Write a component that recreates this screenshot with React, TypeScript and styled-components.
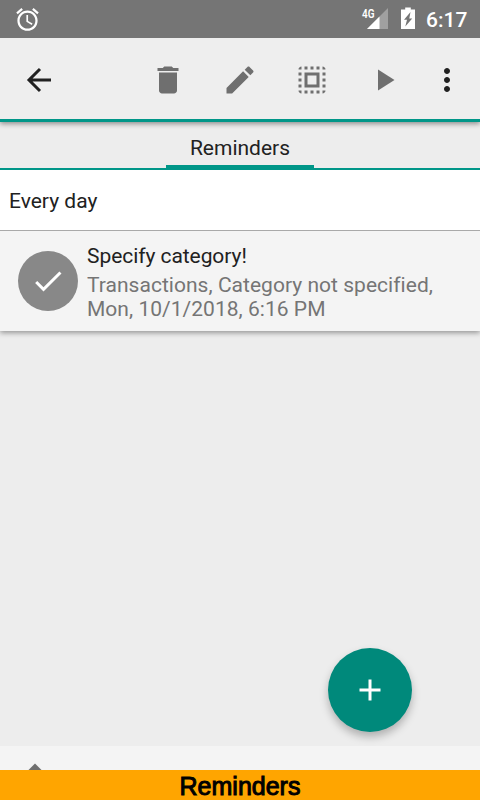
import React from "react";
import styled, { createGlobalStyle } from "styled-components";

const TEAL = "#009688";

const GlobalStyle = createGlobalStyle`
  * { box-sizing: border-box; }
  body { margin: 0; background: #ededed; }
`;

const Screen = styled.div`
  position: relative;
  display: flex;
  flex-direction: column;
  width: 480px;
  height: 800px;
  overflow: hidden;
  background: #ededed;
  color: #212121;
  font-family: Roboto, "Liberation Sans", sans-serif;
  font-size: 21px;
`;

const StatusBar = styled.header`
  display: flex;
  align-items: center;
  flex: none;
  height: 38px;
  padding: 0 12px 0 13.5px;
  background: #757575;
  color: #fff;
`;

const StatusIcons = styled.div`
  display: flex;
  align-items: center;
  gap: 11px;
  margin-left: auto;
`;

const Clock = styled.time`
  width: 42px;
  padding-top: 2px;
  font-weight: 500;
  line-height: 36px;
  white-space: nowrap;
`;

const Toolbar = styled.nav`
  position: relative;
  z-index: 1;
  display: flex;
  align-items: center;
  flex: none;
  height: 84px;
  padding: 2px 15px 0 21px;
  border-bottom: 3px solid ${TEAL};
  box-shadow: 0 2px 5px rgba(0, 0, 0, 0.4);
  clip-path: inset(0 0 -10px 0);
  background: #eee;
`;

const Actions = styled.div`
  display: flex;
  gap: 36px;
  margin-left: auto;
  margin-right: 27px;
`;

const IconButton = styled.button<{ $dark?: boolean }>`
  width: 36px;
  height: 36px;
  padding: 0;
  border: 0;
  background: none;
  color: ${(p) => (p.$dark ? "#212121" : "#6f6f6f")};
  svg { display: block; }
`;

const Tabs = styled.div`
  display: flex;
  justify-content: center;
  flex: none;
  height: 48px;
  border-bottom: 2px solid ${TEAL};
`;

const Tab = styled.div`
  width: 148px;
  height: 46px;
  padding-top: 2px;
  border-bottom: 3px solid ${TEAL};
  line-height: 48px;
  text-align: center;
`;

const Card = styled.section`
  flex: none;
  box-shadow: 0 2px 5px rgba(0, 0, 0, 0.36);
  clip-path: inset(0 0 -10px 0);
`;

const GroupTitle = styled.div`
  height: 61px;
  padding-left: 9px;
  border-bottom: 1px solid #a9a9a9;
  background: #fff;
  line-height: 62px;
`;

const Reminder = styled.div`
  display: flex;
  height: 100px;
  padding: 13px 40px 0 18px;
  background: #f4f4f4;
`;

const CheckBadge = styled.div`
  display: grid;
  place-items: center;
  flex: none;
  width: 60px;
  height: 60px;
  margin: 7px 9px 0 0;
  border-radius: 50%;
  background: #888;
`;

const ReminderText = styled.div`
  display: flex;
  flex-direction: column;
  gap: 4px;
  line-height: 25px;
`;

const Title = styled.div`
  letter-spacing: -0.06px;
`;

const Details = styled.div`
  color: #757575;
  letter-spacing: 0.03px;
  line-height: 24px;
`;

const BottomBar = styled.div`
  position: relative;
  z-index: 1;
  flex: none;
  height: 24px;
  margin-top: auto;
  padding: 16px 0 0 26px;
  overflow: hidden;
  background: #f4f4f4;
  svg { display: block; }
`;

const Caption = styled.footer`
  flex: none;
  height: 30px;
  background: #ffa500;
  color: #000;
  font-family: "Liberation Sans", Arial, sans-serif;
  font-size: 25px;
  line-height: 32px;
  text-align: center;
  -webkit-text-stroke: 1px #000;
`;

const Fab = styled.button`
  position: absolute;
  right: 68px;
  bottom: 68px;
  display: grid;
  place-items: center;
  width: 84px;
  height: 84px;
  padding: 0;
  border: 0;
  border-radius: 50%;
  background: #00897b;
  box-shadow: 0 5px 8px rgba(0, 0, 0, 0.26);
`;

const Icon = ({ d, size = 36, color = "currentColor" }: { d: string; size?: number; color?: string }) => (
  <svg width={size} height={size} viewBox="0 0 24 24" fill={color}>
    <path d={d} />
  </svg>
);

const paths = {
  alarm:
    "M22 5.72l-4.6-3.86-1.29 1.53 4.6 3.86L22 5.72zM7.88 3.39L6.6 1.86 2 5.71l1.29 1.53 4.59-3.85zM12.5 8H11v6l4.75 2.85.75-1.23-4-2.37V8zM12 4c-4.97 0-9 4.03-9 9s4.02 9 9 9c4.97 0 9-4.03 9-9s-4.03-9-9-9zm0 16c-3.87 0-7-3.13-7-7s3.13-7 7-7 7 3.13 7 7-3.13 7-7 7z",
  trash: "M6 19c0 1.1.9 2 2 2h8c1.1 0 2-.9 2-2V7H6v12zM19 4h-3.5l-1-1h-5l-1 1H5v2h14V4z",
  edit: "M3 17.25V21h3.75L17.81 9.94l-3.75-3.75L3 17.25zM20.71 7.04c.39-.39.39-1.02 0-1.41l-2.34-2.34c-.39-.39-1.02-.39-1.41 0l-1.83 1.83 3.75 3.75 1.83-1.83z",
  selectAll:
    "M3 5h2V3c-1.1 0-2 .9-2 2zm0 8h2v-2H3v2zm4 8h2v-2H7v2zM3 9h2V7H3v2zm10-6h-2v2h2V3zm6 0v2h2c0-1.1-.9-2-2-2zM5 21v-2H3c0 1.1.9 2 2 2zm-2-4h2v-2H3v2zM9 3H7v2h2V3zm2 18h2v-2h-2v2zm8-8h2v-2h-2v2zm0 8c1.1 0 2-.9 2-2h-2v2zm0-12h2V7h-2v2zm0 8h2v-2h-2v2zm-4 4h2v-2h-2v2zm0-16h2V3h-2v2zM7 17h10V7H7v10zm2-8h6v6H9V9z",
  play: "M8 5v14l11-7z",
  more: "M12 8c1.1 0 2-.9 2-2s-.9-2-2-2-2 .9-2 2 .9 2 2 2zm0 2c-1.1 0-2 .9-2 2s.9 2 2 2 2-.9 2-2-.9-2-2-2zm0 6c-1.1 0-2 .9-2 2s.9 2 2 2 2-.9 2-2-.9-2-2-2z",
  check: "M9 16.17L4.83 12l-1.42 1.41L9 19 21 7l-1.41-1.41z",
};

const SignalIcon = () => (
  <svg width="28" height="24" viewBox="0 0 28 24">
    <path d="M27 1v21H6z" fill="#a0a0a0" />
    <path d="M18.5 9.5V22H6z" fill="#fff" />
    <text x="1" y="10.8" fill="#fff" fontSize="13" fontWeight="600" textLength="12.500" lengthAdjust="spacingAndGlyphs">
      4G
    </text>
  </svg>
);

const BatteryIcon = () => (
  <svg width="15" height="24" viewBox="0 0 15 24">
    <path d="M5.200 .5h5.600v2H15V22H1V2.500h4.200z" fill="#fff" />
    <path d="M10.500 5 4 12.800h3L5.300 19.500 12.200 11.500H9.300z" fill="#757575" />
  </svg>
);

export default function App() {
  return (
    <Screen>
      <GlobalStyle />
      <StatusBar>
        <Icon d={paths.alarm} size={27} />
        <StatusIcons>
          <SignalIcon />
          <BatteryIcon />
          <Clock>6:17</Clock>
        </StatusIcons>
      </StatusBar>
      <Toolbar>
        <IconButton $dark aria-label="Back">
          <svg width="36" height="36" viewBox="0 0 36 36" fill="none" stroke="currentColor" strokeWidth="3">
            <path d="M30 18H8M19 7 8 18l11 11" />
          </svg>
        </IconButton>
        <Actions>
          <IconButton aria-label="Delete"><Icon d={paths.trash} /></IconButton>
          <IconButton aria-label="Edit"><Icon d={paths.edit} /></IconButton>
          <IconButton aria-label="Select all"><Icon d={paths.selectAll} /></IconButton>
          <IconButton aria-label="Run"><Icon d={paths.play} /></IconButton>
        </Actions>
        <IconButton $dark aria-label="More"><Icon d={paths.more} /></IconButton>
      </Toolbar>
      <Tabs>
        <Tab>Reminders</Tab>
      </Tabs>
      <Card>
        <GroupTitle>Every day</GroupTitle>
        <Reminder>
          <CheckBadge><Icon d={paths.check} color="#fff" /></CheckBadge>
          <ReminderText>
            <Title>Specify category!</Title>
            <Details>
              Transactions, Category not specified,
              <br />
              Mon, 10/1/2018, 6:16 PM
            </Details>
          </ReminderText>
        </Reminder>
      </Card>
      <BottomBar>
        <svg width="18" height="12" viewBox="0 0 18 12">
          <path d="M9 1.500 18 10.500H0z" fill="#6f6f6f" />
        </svg>
      </BottomBar>
      <Caption>Reminders</Caption>
      <Fab aria-label="Add">
        <svg width="22" height="22" viewBox="0 0 22 22">
          <path d="M11 .5v21M.5 11h21" stroke="#fff" strokeWidth="3" />
        </svg>
      </Fab>
    </Screen>
  );
}
